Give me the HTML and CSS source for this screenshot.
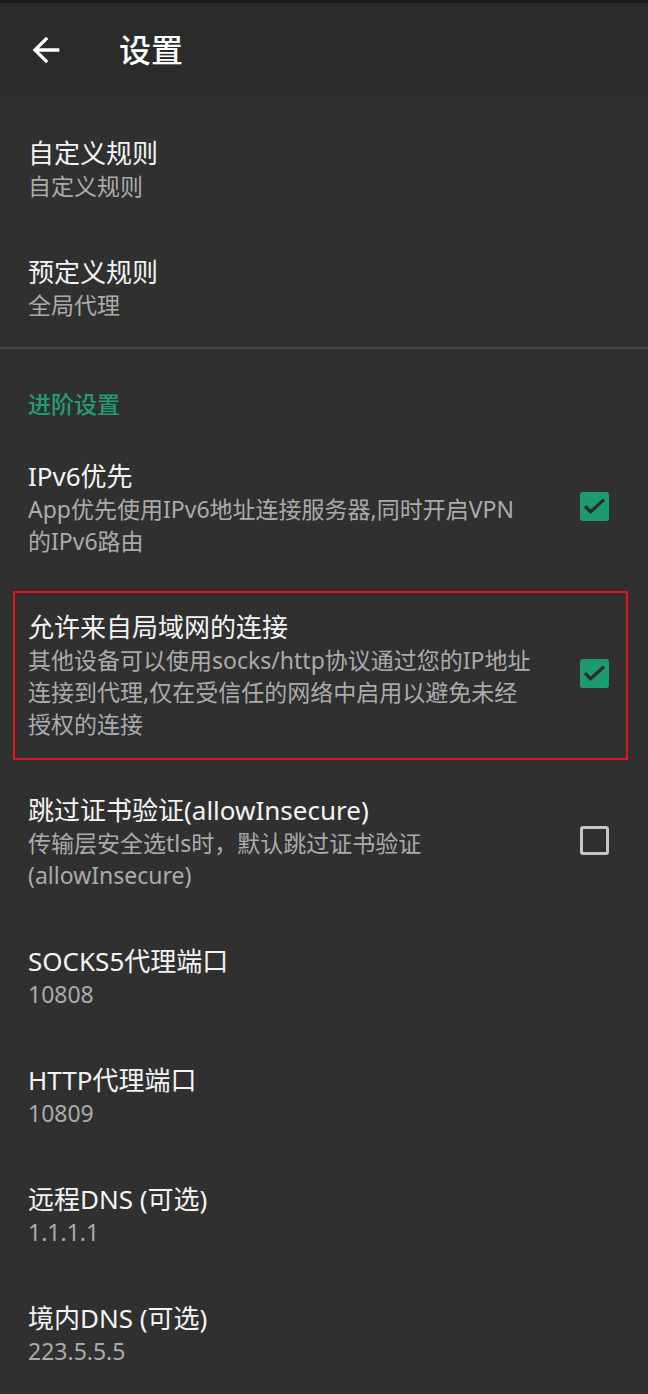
FILE: index.html
```html
<!DOCTYPE html>
<html lang="zh-CN">
<head>
<meta charset="utf-8">
<title>设置</title>
<link rel="stylesheet" href="styles.css">
</head>
<body>
<div class="statusbar"></div>
<header class="toolbar">
  <span class="back" aria-label="返回">
    <svg viewBox="0 0 24 24" width="40" height="40"><path d="M20 11H7.83l5.59-5.59L12 4l-8 8 8 8 1.41-1.41L7.83 13H20v-2z" fill="#ffffff"/></svg>
  </span>
  <h1 class="title">设置</h1>
</header>
<main class="list">
  <div class="pref">
    <div class="pref-text">
      <div class="pref-title">自定义规则</div>
      <div class="pref-summary">自定义规则</div>
    </div>
  </div>
  <div class="pref">
    <div class="pref-text">
      <div class="pref-title">预定义规则</div>
      <div class="pref-summary">全局代理</div>
    </div>
  </div>
  <div class="divider"></div>
  <div class="category">进阶设置</div>
  <div class="pref">
    <div class="pref-text">
      <div class="pref-title">IPv6优先</div>
      <div class="pref-summary">App优先使用IPv6地址连接服务器,同时开启VPN的IPv6路由</div>
    </div>
    <span class="checkbox checked"><svg viewBox="0 0 29 29" width="29" height="29"><polyline points="5,14.2 10.6,19.8 24,7.6" fill="none" stroke="#2c2c2c" stroke-width="3.3"/></svg></span>
  </div>
  <div class="pref highlighted">
    <div class="pref-text">
      <div class="pref-title">允许来自局域网的连接</div>
      <div class="pref-summary">其他设备可以使用socks/http协议通过您的IP地址连接到代理,仅在受信任的网络中启用以避免未经授权的连接</div>
    </div>
    <span class="checkbox checked"><svg viewBox="0 0 29 29" width="29" height="29"><polyline points="5,14.2 10.6,19.8 24,7.6" fill="none" stroke="#2c2c2c" stroke-width="3.3"/></svg></span>
  </div>
  <div class="pref">
    <div class="pref-text">
      <div class="pref-title">跳过证书验证(allowInsecure)</div>
      <div class="pref-summary">传输层安全选tls时，默认跳过证书验证(allowInsecure)</div>
    </div>
    <span class="checkbox"></span>
  </div>
  <div class="pref">
    <div class="pref-text">
      <div class="pref-title">SOCKS5代理端口</div>
      <div class="pref-summary">10808</div>
    </div>
  </div>
  <div class="pref">
    <div class="pref-text">
      <div class="pref-title">HTTP代理端口</div>
      <div class="pref-summary">10809</div>
    </div>
  </div>
  <div class="pref">
    <div class="pref-text">
      <div class="pref-title">远程DNS (可选)</div>
      <div class="pref-summary">1.1.1.1</div>
    </div>
  </div>
  <div class="pref">
    <div class="pref-text">
      <div class="pref-title">境内DNS (可选)</div>
      <div class="pref-summary">223.5.5.5</div>
    </div>
  </div>
</main>
</body>
</html>
```
FILE: styles.css
```css
html, body {
  margin: 0;
  padding: 0;
}
body {
  background: #303030;
  color: #f2f2f2;
  font-family: "Noto Sans", "Noto Sans CJK SC", sans-serif;
  height: 1394px;
  overflow: hidden;
}
.statusbar {
  height: 3px;
  background: #1b1b1b;
}
.toolbar {
  height: 93px;
  background: #2b2b2b;
  display: flex;
  align-items: center;
  padding-left: 26px;
  gap: 53px;
  box-sizing: border-box;
}
.back {
  display: flex;
  width: 40px;
  height: 40px;
}
.title {
  margin: 0;
  font-size: 32px;
  font-weight: 500;
  color: #ffffff;
  line-height: 40px;
}
.list {
  padding-top: 13px;
}
.pref {
  display: flex;
  align-items: center;
  padding: 27px 39px 26px 28px;
  position: relative;
}
.pref-text {
  width: 505px;
}
.pref-title {
  font-size: 26px;
  line-height: 34px;
  color: #f4f4f4;
}
.pref-summary {
  font-size: 23px;
  line-height: 32px;
  color: #ababab;
}
.checkbox {
  margin-left: auto;
  margin-top: -3px;
  width: 29px;
  height: 29px;
  box-sizing: border-box;
  border: 3px solid #c6c6c6;
  border-radius: 3px;
  display: flex;
}
.checkbox.checked {
  border: none;
  background: #1c9a71;
}
.divider {
  height: 2px;
  background: #464646;
}
.category {
  padding: 39px 28px 12px;
  font-size: 23px;
  line-height: 32px;
  font-weight: 500;
  color: #1f9e75;
}
.highlighted::after {
  content: "";
  position: absolute;
  top: 8px;
  bottom: 6px;
  left: 13px;
  right: 20px;
  border: 2px solid #e3121c;
}
```
